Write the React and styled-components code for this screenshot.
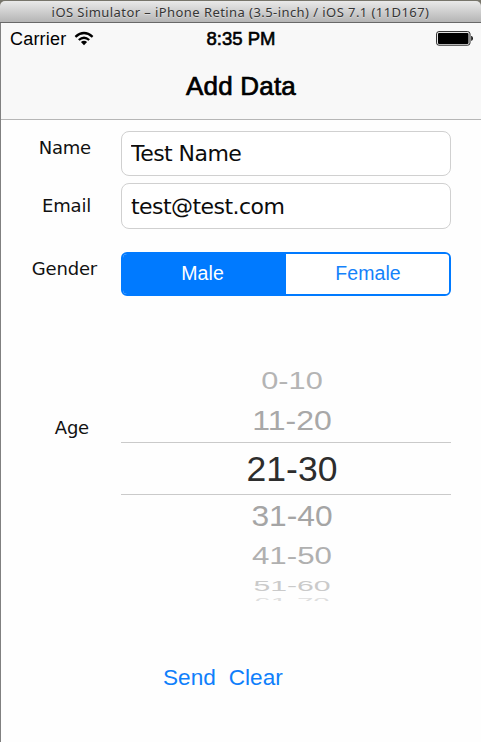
import React from 'react';
import styled, { createGlobalStyle } from 'styled-components';

const GlobalStyle = createGlobalStyle`
  * { box-sizing: border-box; }
  body { margin: 0; background: #fff; overflow: hidden; }
  button, input { font: inherit; margin: 0; }
`;

const Screen = styled.div`
  width: 481px;
  height: 742px;
  border-left: 1px solid #808080;
  background: #fefefe;
  color: #000;
  font-family: "Liberation Sans", Arial, sans-serif;
  display: flex;
  flex-direction: column;
`;

const WindowBar = styled.div`
  height: 23px;
  flex: none;
  margin-left: -1px;
  background: #77756b;
  padding-top: 1px;
`;

const WindowTitle = styled.div`
  height: 22px;
  border-radius: 5px 5px 0 0;
  border-bottom: 1px solid #686868;
  background: linear-gradient(#e9e9e9, #b5b5b5);
  color: #353535;
  font: 13px/22px "Noto Sans", sans-serif;
  letter-spacing: 0.43px;
  text-shadow: 0 1px 0 rgba(255, 255, 255, 0.4);
  text-align: center;
  white-space: nowrap;
`;

const Header = styled.header`
  height: 97px;
  flex: none;
  background: #f8f8f8;
  border-bottom: 1px solid #b6b6b6;
`;

const StatusBar = styled.div`
  height: 32px;
  display: grid;
  grid-template-columns: 1fr auto 1fr;
  align-items: center;
  padding: 0 7px 0 9px;
  font-size: 18px;
  line-height: 32px;
`;

const Carrier = styled.div`
  display: flex;
  align-items: center;
  gap: 8px;
  letter-spacing: 0.2px;

  svg { margin-top: -2px; }
`;

const Clock = styled.div`
  margin-right: 2px;
  font-size: 18.5px;
  -webkit-text-stroke: 0.6px #000;
`;

const Battery = styled.svg`
  justify-self: end;
  display: block;
  margin-top: -2px;
`;

const PageTitle = styled.h1`
  margin: 0;
  font-size: 26px;
  font-weight: 400;
  line-height: 63px;
  letter-spacing: 0.2px;
  text-align: center;
  -webkit-text-stroke: 0.7px #000;
`;

const Form = styled.main`
  padding: 11px 30px 0 0;
  display: grid;
  grid-template-columns: 120px 330px;
  grid-template-rows: 45px 53px 67px 305px;
`;

const Row = styled.div`
  display: contents;
`;

const Label = styled.label`
  justify-self: end;
  margin-top: ${p => p.$top}px;
  margin-right: ${p => p.$right}px;
  height: 22px;
  font: 18px/22px "DejaVu Sans", sans-serif;
  letter-spacing: -0.2px;
  color: #111;
`;

const Field = styled.input`
  width: 330px;
  height: ${p => p.$height}px;
  margin-top: ${p => p.$top || 0}px;
  border: 1px solid #d0d0d0;
  border-radius: 8px;
  padding: 0 9px;
  background: #fff;
  color: #0c0c0c;
  outline: none;
  font: 22px/30px "DejaVu Sans", sans-serif;
  letter-spacing: -0.55px;
`;

const Segments = styled.div`
  display: grid;
  grid-template-columns: 1fr 1fr;
  height: 44px;
  margin-top: 23px;
  border: 2px solid #007aff;
  border-radius: 6px;
  overflow: hidden;
`;

const Segment = styled.button`
  border: 0;
  padding: ${p => (p.$active ? '0 4px 1px 0' : '0 0 1px 1px')};
  background: ${p => (p.$active ? '#007aff' : '#fff')};
  color: ${p => (p.$active ? '#fff' : '#1582fa')};
  font-size: 19.5px;
  letter-spacing: 0.1px;
`;

const Picker = styled.div`
  height: 240px;
  margin-top: 66px;
  display: flex;
  flex-direction: column;
  overflow: hidden;
`;

const Slot = styled.div`
  height: ${p => p.$height}px;
  flex: none;
  display: flex;
  align-items: center;
  justify-content: center;
  overflow: ${p => (p.$clip ? 'hidden' : 'visible')};
  border: 0 solid #cacaca;
  border-width: ${p => (p.$selected ? '1px 0' : '0')};
`;

const Age = styled.span`
  color: ${p => p.$color};
  font-size: ${p => p.$size}px;
  line-height: 36px;
  white-space: nowrap;
  transform: translate(6px, ${p => p.$y || 0}px) scaleY(${p => p.$flat});
`;

const Actions = styled.div`
  display: flex;
  gap: 13px;
  margin: 63px 0 0 162px;
`;

const Action = styled.button`
  border: 0;
  padding: 0;
  background: none;
  color: #0f7ffb;
  font-size: 22.6px;
  line-height: 28px;
`;

const AGES = [
  { text: '0-10', height: 32, size: 30.7, flat: 0.75, color: '#b4b4b4', y: 3 },
  { text: '11-20', height: 48, size: 32, flat: 0.89, color: '#a8a8a8', y: 2.5 },
  { text: '21-30', height: 53, size: 35.5, flat: 1, color: '#2d2d2d', selected: true },
  { text: '31-40', height: 41, size: 31.7, flat: 0.93, color: '#a5a5a5', y: -0.5 },
  { text: '41-50', height: 40, size: 31.3, flat: 0.74, color: '#b0b0b0', y: 1 },
  { text: '51-60', height: 18, size: 30.2, flat: 0.5, color: '#cacaca', y: 0.5 },
  { text: '61-70', height: 7, size: 29.5, flat: 0.35, color: '#dedede', y: 4, clip: true },
];

export default function App() {
  return (
    <>
      <GlobalStyle />
      <Screen>
        <WindowBar>
          <WindowTitle>iOS Simulator – iPhone Retina (3.5-inch) / iOS 7.1 (11D167)</WindowTitle>
        </WindowBar>
        <Header>
          <StatusBar>
            <Carrier>
              Carrier
              <svg width="20" height="15" viewBox="0 0 20 15" fill="none" stroke="#000" strokeWidth="2.3">
                <path d="M1.4 5.8Q10 -1.8 18.6 5.8" />
                <path d="M4.8 9Q10 4.4 15.2 9" />
                <path d="M10 14.2L6.9 11.1Q10 8.4 13.1 11.1Z" fill="#000" stroke="none" />
              </svg>
            </Carrier>
            <Clock>8:35 PM</Clock>
            <Battery width="38" height="15" viewBox="0 0 38 15">
              <rect x=".6" y=".6" width="33.4" height="13.6" rx="2.3" fill="none" stroke="#222" strokeWidth="1" />
              <rect x="2" y="2" width="30.5" height="11" rx="1" fill="#000" />
              <path d="M35.2 5h.6q1.2 1 1.2 2.4T35.8 9.8h-.6z" fill="#111" />
            </Battery>
          </StatusBar>
          <PageTitle>Add Data</PageTitle>
        </Header>
        <Form>
          <Row>
            <Label $top={6} $right={30}>Name</Label>
            <Field $height={45} defaultValue="Test Name" />
          </Row>
          <Row>
            <Label $top={19} $right={30}>Email</Label>
            <Field $height={46} $top={7} defaultValue="test@test.com" />
          </Row>
          <Row>
            <Label $top={29} $right={24}>Gender</Label>
            <Segments>
              <Segment $active>Male</Segment>
              <Segment>Female</Segment>
            </Segments>
          </Row>
          <Row>
            <Label $top={121} $right={32}>Age</Label>
            <Picker>
              {AGES.map(a => (
                <Slot key={a.text} $height={a.height} $selected={a.selected} $clip={a.clip}>
                  <Age $size={a.size} $flat={a.flat} $color={a.color} $y={a.y}>{a.text}</Age>
                </Slot>
              ))}
            </Picker>
          </Row>
        </Form>
        <Actions>
          <Action>Send</Action>
          <Action>Clear</Action>
        </Actions>
      </Screen>
    </>
  );
}
